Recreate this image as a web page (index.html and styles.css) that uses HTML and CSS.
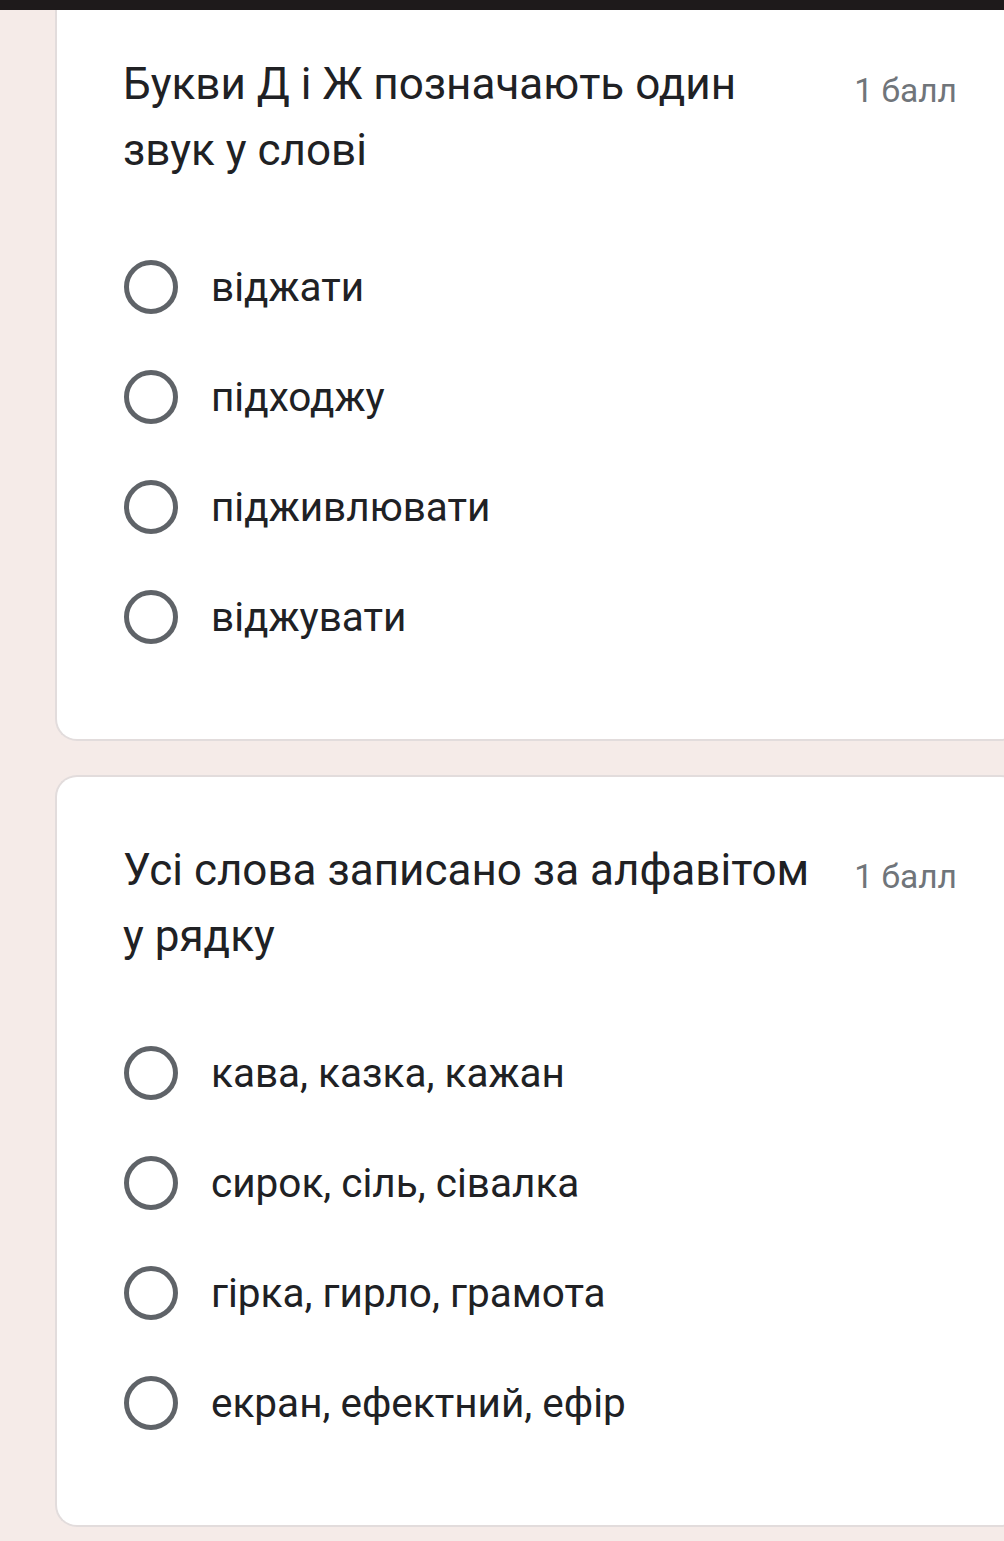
FILE: index.html
```html
<!DOCTYPE html>
<html>
<head>
  <meta charset="UTF-8">
  <meta name="viewport" content="width=device-width, initial-scale=1">
  <title>Тест</title>
  <link rel="stylesheet" href="styles.css">
</head>
<body>
  <div class="topbar"></div>

  <main class="form">
    <!-- question 1 (top is scrolled off) -->
    <section class="card card-cut">
      <div class="question-head">
        <div class="question-title">Букви Д і Ж позначають один звук у слові</div>
        <div class="points">1 балл</div>
      </div>
      <div class="options">
        <label class="option"><span class="radio"></span><span class="option-text">віджати</span></label>
        <label class="option"><span class="radio"></span><span class="option-text">підходжу</span></label>
        <label class="option"><span class="radio"></span><span class="option-text">підживлювати</span></label>
        <label class="option"><span class="radio"></span><span class="option-text">віджувати</span></label>
      </div>
    </section>

    <!-- question 2 -->
    <section class="card">
      <div class="question-head">
        <div class="question-title">Усі слова записано за алфавітом у рядку</div>
        <div class="points">1 балл</div>
      </div>
      <div class="options">
        <label class="option"><span class="radio"></span><span class="option-text">кава, казка, кажан</span></label>
        <label class="option"><span class="radio"></span><span class="option-text">сирок, сіль, сівалка</span></label>
        <label class="option"><span class="radio"></span><span class="option-text">гірка, гирло, грамота</span></label>
        <label class="option"><span class="radio"></span><span class="option-text">екран, ефектний, ефір</span></label>
      </div>
    </section>
  </main>
</body>
</html>
```

FILE: styles.css
```css
html, body {
    margin: 0;
    padding: 0;
}
body {
    background: #f5ebe8;
    font-family: Roboto, "Noto Sans", sans-serif;
    color: #202124;
    overflow: hidden;
}
.topbar {
    height: 10px;
    background: #1e1a1b;
}
.form {
    padding-left: 55px;
    display: flex;
    flex-direction: column;
    gap: 34px;
}
.card {
    width: 968px;
    box-sizing: border-box;
    background: #fff;
    border: 2px solid #e2dcdc;
    border-right: none;
    border-radius: 22px;
    padding: 60px 66px 67px 66px;
}
.card-cut {
    border-top: none;
    border-top-left-radius: 0;
    padding-top: 41px;
}
.question-head {
    display: flex;
    align-items: flex-start;
}
.question-title {
    flex: 1;
    font-size: 44px;
    line-height: 66px;
    padding-right: 30px;
}
.points {
    font-size: 33.5px;
    line-height: 66px;
    color: #70757a;
    padding-top: 7px;
    white-space: nowrap;
}
.options {
    margin-top: 49px;
    display: flex;
    flex-direction: column;
}
.option {
    display: flex;
    align-items: center;
    height: 110px;
}
.radio {
    width: 44px;
    height: 44px;
    border: 5px solid #5f6368;
    border-radius: 50%;
    flex: none;
    margin-left: 1px;
}
.option-text {
    margin-left: 33px;
    font-size: 40.5px;
}
```
